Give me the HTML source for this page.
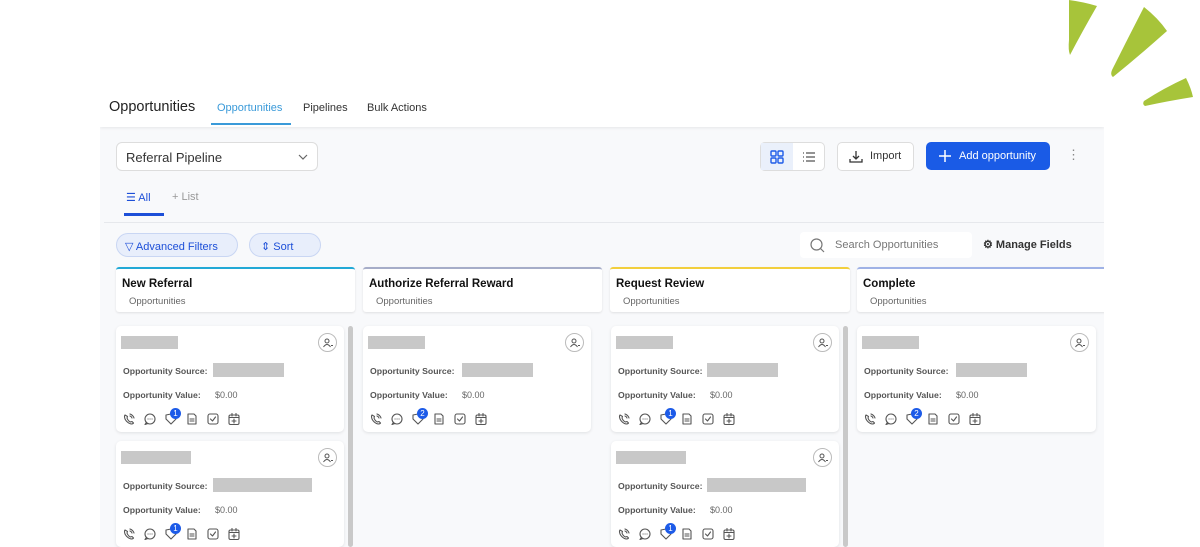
<!DOCTYPE html>
<html><head><meta charset="utf-8"><style>
*{box-sizing:border-box;margin:0;padding:0}
body{width:1200px;height:547px;background:#fff;font-family:"Liberation Sans",sans-serif;position:relative;overflow:hidden;color:#111}
.a{position:absolute}
.app{left:100px;top:83px;width:1004px;height:464px;background:#f8f9fb;overflow:hidden}
.hdr{left:0;top:0;width:1004px;height:44px;background:#fff;box-shadow:0 1px 3px rgba(0,0,0,.08)}
.col{background:#fff;border-radius:3px;box-shadow:0 1px 2px rgba(0,0,0,.1);height:45px}
.col b{position:absolute;left:6px;top:9px;font-size:11.5px;color:#111}
.col span{position:absolute;left:13px;top:27px;font-size:9.5px;color:#666}
.card{background:#fff;border-radius:5px;box-shadow:0 1px 3px rgba(0,0,0,.1);width:228px;height:106px}
.gb{position:absolute;background:#c8c8c8}
.lbl{position:absolute;left:7px;font-size:8.7px;font-weight:bold;color:#555}
.val{position:absolute;left:99px;font-size:9px;color:#666}
.av{position:absolute;right:7px;top:7px;width:19px;height:19px;border:1px solid #bbb;border-radius:50%}
.ic{position:absolute;top:87px;left:7px}
.bdg{position:absolute;top:82px;left:54px;width:11px;height:11px;border-radius:50%;background:#1d5be8;color:#fff;font-size:8px;text-align:center;line-height:11px}
.sb{background:#c9c9c9;width:5px;border-radius:3px}
</style></head><body>
<svg width="0" height="0" style="position:absolute"><defs>
<g id="icons" fill="none" stroke="#555" stroke-width="1.1" stroke-linecap="round" stroke-linejoin="round">
<path d="M2 2 Q1 3 2 6 Q4 10 8 11 Q10 11 10.5 10 L9 8.5 L7.5 9 Q5 8 4 5 L4.5 3.5 Z M7 1 Q10 2 11 5 M7 3 Q8.5 3.5 9 5"/>
<g transform="translate(21,0)"><circle cx="6" cy="6" r="5"/><path d="M2.5 9.5 L1 11.5 L4 10.5"/><path d="M4 6h.1M6 6h.1M8 6h.1"/></g>
<g transform="translate(42,0)"><path d="M1 2 L6 1 L11 6 L6 11 L1 6 Z"/></g>
<g transform="translate(63,0)"><path d="M2 1 H8 L10 3 V11 H2 Z M4 6 H8 M4 8 H8"/></g>
<g transform="translate(84,0)"><rect x="1" y="1" width="10" height="10" rx="2"/><path d="M3.5 6 L5.5 8 L8.5 4"/></g>
<g transform="translate(105,0)"><rect x="1" y="2" width="10" height="9.5" rx="1.5"/><path d="M4 0.5 V3 M8 0.5 V3 M1 4.5 H11 M6 6 V10 M4 8 H8"/></g>
</g>
<g id="person" fill="none" stroke="#555" stroke-width="1"><circle cx="5" cy="4" r="2"/><path d="M1.5 10 Q5 5 8.5 10 M9 8.5 L11 8.5"/></g>
</defs></svg>
<svg class="a" style="left:1060px;top:0" width="140" height="110"><path d="M9 0 Q24 2 37 6 Q22 32 10 55 Q8 50 9 40 Z" fill="#a7c43a"/><path d="M84 7 Q98 18 107 31 Q80 55 53 77 Q50 75 52 70 Q68 38 84 7 Z" fill="#a7c43a"/><path d="M126 78 Q131 88 133 97 Q108 101 85 106 Q82 104 84 101 Q104 88 126 78 Z" fill="#a7c43a"/></svg>
<div class="a app">
 <div class="a hdr">
  <div class="a" style="left:9px;top:16px;font-size:14.5px;color:#222">Opportunities</div>
  <div class="a" style="left:117px;top:19px;font-size:11px;color:#3a9ad9">Opportunities</div>
  <div class="a" style="left:111px;top:40px;width:80px;height:2px;background:#3a9ad9"></div>
  <div class="a" style="left:203px;top:19px;font-size:11px;color:#333">Pipelines</div>
  <div class="a" style="left:267px;top:19px;font-size:11px;color:#333">Bulk Actions</div>
 </div>
 <div class="a" style="left:16px;top:59px;width:202px;height:29px;background:#fff;border:1px solid #ddd;border-radius:6px"><span class="a" style="left:9px;top:7px;font-size:13px;color:#333">Referral Pipeline</span><svg class="a" style="left:181px;top:10px" width="10" height="8"><path d="M1 2 L5 6 L9 2" fill="none" stroke="#666" stroke-width="1.2"/></svg></div>
 <div class="a" style="left:26px;top:108px;font-size:11px;color:#1d4fd8">☰ All</div>
 <div class="a" style="left:24px;top:130px;width:40px;height:3px;background:#1d4fd8"></div>
 <div class="a" style="left:72px;top:108px;font-size:11px;color:#999">+ List</div>
 <div class="a" style="left:4px;top:139px;width:1000px;height:1px;background:#e6e8ec"></div>
 <div class="a" style="left:660px;top:59px;width:65px;height:29px;border:1px solid #ddd;border-radius:5px;background:#fff"><div class="a" style="left:0;top:0;width:32px;height:27px;background:#eaf0fb"></div>
 <svg class="a" style="left:9px;top:7px" width="14" height="14" fill="none" stroke="#1d5be8" stroke-width="1.4"><rect x="1" y="1" width="5" height="5" rx="1"/><rect x="8" y="1" width="5" height="5" rx="1"/><rect x="1" y="8" width="5" height="5" rx="1"/><rect x="8" y="8" width="5" height="5" rx="1"/></svg>
 <svg class="a" style="left:41px;top:8px" width="14" height="12" fill="none" stroke="#555" stroke-width="1.3"><path d="M1 2h1M1 6h1M1 10h1M4 2h9M4 6h9M4 10h9"/></svg></div>
 <div class="a" style="left:737px;top:59px;width:77px;height:29px;border:1px solid #ddd;border-radius:5px;background:#fff;font-size:11px;color:#333"><svg class="a" style="left:11px;top:7px" width="14" height="14" fill="none" stroke="#333" stroke-width="1.3"><path d="M7 1V9M4 6L7 9L10 6M1 9V12H13V9"/></svg><span class="a" style="left:32px;top:7px">Import</span></div>
 <div class="a" style="left:826px;top:59px;width:124px;height:28px;border-radius:5px;background:#1a5be6;color:#fff;font-size:11px"><svg class="a" style="left:13px;top:8px" width="12" height="12" stroke="#fff" stroke-width="1.5"><path d="M6 0V12M0 6H12"/></svg><span class="a" style="left:33px;top:8px">Add opportunity</span></div>
 <div class="a" style="left:967px;top:64px;color:#888;font-size:13px">⋮</div>
 <div class="a" style="left:16px;top:150px;width:122px;height:24px;border:1px solid #c9d6f3;border-radius:12px;background:#e8eefb;color:#1d4fd8;font-size:11px;padding:6px 0 0 8px">▽ Advanced Filters</div>
 <div class="a" style="left:149px;top:150px;width:72px;height:24px;border:1px solid #c9d6f3;border-radius:12px;background:#e8eefb;color:#1d4fd8;font-size:11px;padding:6px 0 0 11px">⇕ Sort</div>
 <div class="a" style="left:700px;top:149px;width:172px;height:26px;background:#fff;border-radius:4px;font-size:11px;color:#777"><svg class="a" style="left:10px;top:6px" width="15" height="15" fill="none" stroke="#777" stroke-width="1.2"><circle cx="6.5" cy="6.5" r="5.5"/><path d="M10.5 10.5L14 14"/></svg><span class="a" style="left:35px;top:7px">Search Opportunities</span></div>
 <div class="a" style="left:883px;top:155px;font-size:11px;color:#333;font-weight:bold">⚙ Manage Fields</div>
 <div class="a col" style="left:16px;top:184px;width:239px;border-top:2px solid #22a9d6"><b>New Referral</b><span>Opportunities</span></div>
 <div class="a col" style="left:263px;top:184px;width:239px;border-top:2px solid #a6adc8"><b>Authorize Referral Reward</b><span>Opportunities</span></div>
 <div class="a col" style="left:510px;top:184px;width:240px;border-top:2px solid #f2cf3d"><b>Request Review</b><span>Opportunities</span></div>
 <div class="a col" style="left:757px;top:184px;width:250px;border-top:2px solid #9fb2e6"><b>Complete</b><span>Opportunities</span></div>
 <div class="a sb" style="left:248px;top:243px;height:221px"></div>
 <div class="a sb" style="left:743px;top:243px;height:221px"></div>
 <div class="a card" style="left:16px;top:243px"><div class="gb" style="left:5px;top:10px;width:57px;height:13px"></div><div class="av"><svg class="a" style="left:3px;top:3px" width="12" height="12"><use href="#person"/></svg></div><div class="lbl" style="top:40px">Opportunity Source:</div><div class="gb" style="left:97px;top:37px;width:71px;height:14px"></div><div class="lbl" style="top:64px">Opportunity Value:</div><div class="val" style="top:64px">$0.00</div><svg class="ic" width="120" height="13"><use href="#icons"/></svg><div class="bdg">1</div></div>
 <div class="a card" style="left:16px;top:358px"><div class="gb" style="left:5px;top:10px;width:70px;height:13px"></div><div class="av"><svg class="a" style="left:3px;top:3px" width="12" height="12"><use href="#person"/></svg></div><div class="lbl" style="top:40px">Opportunity Source:</div><div class="gb" style="left:97px;top:37px;width:99px;height:14px"></div><div class="lbl" style="top:64px">Opportunity Value:</div><div class="val" style="top:64px">$0.00</div><svg class="ic" width="120" height="13"><use href="#icons"/></svg><div class="bdg">1</div></div>
 <div class="a card" style="left:263px;top:243px"><div class="gb" style="left:5px;top:10px;width:57px;height:13px"></div><div class="av"><svg class="a" style="left:3px;top:3px" width="12" height="12"><use href="#person"/></svg></div><div class="lbl" style="top:40px">Opportunity Source:</div><div class="gb" style="left:99px;top:37px;width:71px;height:14px"></div><div class="lbl" style="top:64px">Opportunity Value:</div><div class="val" style="top:64px">$0.00</div><svg class="ic" width="120" height="13"><use href="#icons"/></svg><div class="bdg">2</div></div>
 <div class="a card" style="left:511px;top:243px"><div class="gb" style="left:5px;top:10px;width:57px;height:13px"></div><div class="av"><svg class="a" style="left:3px;top:3px" width="12" height="12"><use href="#person"/></svg></div><div class="lbl" style="top:40px">Opportunity Source:</div><div class="gb" style="left:96px;top:37px;width:71px;height:14px"></div><div class="lbl" style="top:64px">Opportunity Value:</div><div class="val" style="top:64px">$0.00</div><svg class="ic" width="120" height="13"><use href="#icons"/></svg><div class="bdg">1</div></div>
 <div class="a card" style="left:511px;top:358px"><div class="gb" style="left:5px;top:10px;width:70px;height:13px"></div><div class="av"><svg class="a" style="left:3px;top:3px" width="12" height="12"><use href="#person"/></svg></div><div class="lbl" style="top:40px">Opportunity Source:</div><div class="gb" style="left:96px;top:37px;width:99px;height:14px"></div><div class="lbl" style="top:64px">Opportunity Value:</div><div class="val" style="top:64px">$0.00</div><svg class="ic" width="120" height="13"><use href="#icons"/></svg><div class="bdg">1</div></div>
 <div class="a card" style="left:757px;top:243px;width:239px"><div class="gb" style="left:5px;top:10px;width:57px;height:13px"></div><div class="av"><svg class="a" style="left:3px;top:3px" width="12" height="12"><use href="#person"/></svg></div><div class="lbl" style="top:40px">Opportunity Source:</div><div class="gb" style="left:99px;top:37px;width:71px;height:14px"></div><div class="lbl" style="top:64px">Opportunity Value:</div><div class="val" style="top:64px">$0.00</div><svg class="ic" width="120" height="13"><use href="#icons"/></svg><div class="bdg">2</div></div>
</div>
</body></html>
